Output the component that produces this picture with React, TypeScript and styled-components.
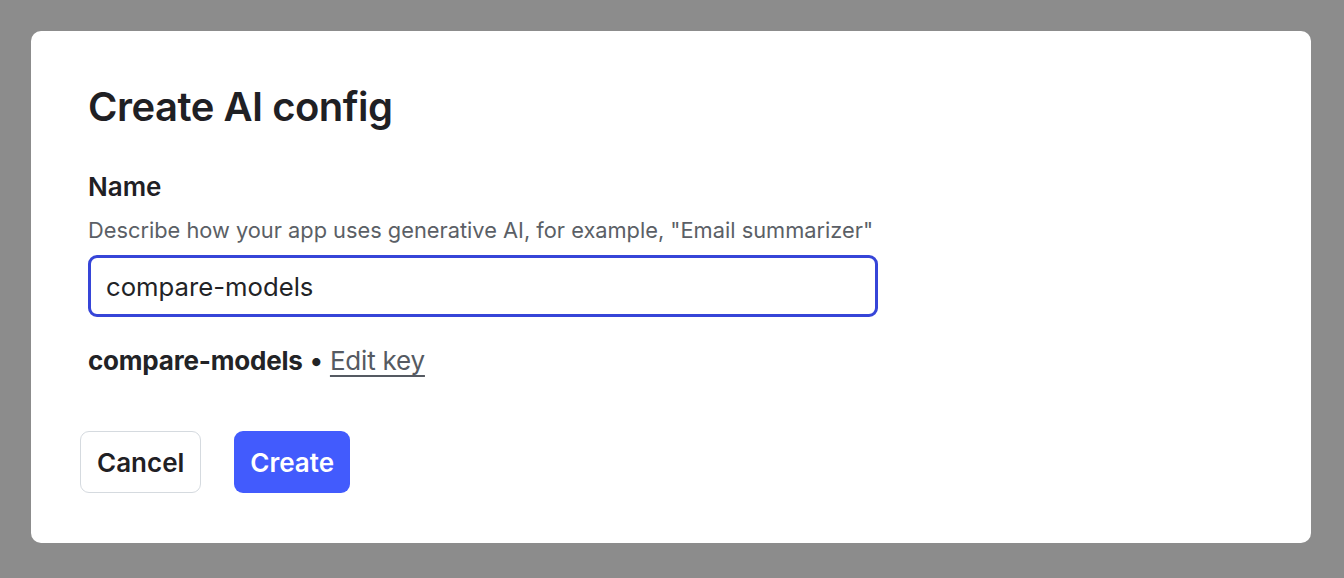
import styled, { createGlobalStyle } from "styled-components";

const GlobalStyle = createGlobalStyle`
    html, body {
        margin: 0;
        padding: 0;
        background: #8c8c8c;
        font-family: Inter, "Noto Sans", sans-serif;
    }
    * {
        box-sizing: border-box;
    }
`

const Backdrop = styled.div`
    width: 1344px;
    height: 578px;
    padding: 31px 33px 35px 31px;
    background: #8c8c8c;
`

const Dialog = styled.div`
    display: flex;
    flex-direction: column;
    height: 512px;
    background: #ffffff;
    border-radius: 10px;
    padding: 52px 57px 0 57px;
`

const Title = styled.h1`
    margin: 0;
    font-size: 40px;
    line-height: 48px;
    font-weight: 600;
    color: #1f2024;
    letter-spacing: -0.5px;
`

const Field = styled.div`
    display: flex;
    flex-direction: column;
    margin-top: 40px;
    width: 790px;
`

const Label = styled.label`
    font-size: 26px;
    font-weight: 600;
    line-height: 32px;
    color: #1f2024;
`

const Hint = styled.p`
    margin: 13px 0 0;
    font-size: 21.8px;
    line-height: 28px;
    white-space: nowrap;
    color: #5b5f66;
`

const Input = styled.input`
    margin-top: 11px;
    height: 62px;
    width: 100%;
    border: 3px solid #3645d8;
    border-radius: 9px;
    padding: 0 15px;
    font-family: inherit;
    font-size: 25.7px;
    color: #222326;
    outline: none;
`

const KeyLine = styled.div`
    margin-top: 28px;
    font-size: 26px;
    line-height: 32px;
    color: #222326;
`

const KeyName = styled.span`
    font-weight: 700;
    letter-spacing: -0.2px;
`

const Dot = styled.span`
    margin: 0 -1px;
`

const EditLink = styled.a`
    color: #555a62;
    text-decoration: underline;
    text-underline-offset: 5px;
    text-decoration-thickness: 1.5px;
    letter-spacing: -0.2px;
    cursor: pointer;
`

const Actions = styled.div`
    display: flex;
    gap: 33px;
    margin-top: 54px;
    margin-left: -8px;
`

const Button = styled.button<{ $primary?: boolean }>`
    height: 62px;
    padding: 0 16px;
    border-radius: 9px;
    font-family: inherit;
    font-size: 26px;
    font-weight: 600;
    cursor: pointer;
    border: ${({ $primary }) => ($primary ? "none" : "1.5px solid #d5dadf")};
    background: ${({ $primary }) => ($primary ? "#425bfd" : "#ffffff")};
    color: ${({ $primary }) => ($primary ? "#ffffff" : "#1f2024")};
`

const App = (): JSX.Element => {
    return (
        <>
            <GlobalStyle />
            <Backdrop>
                <Dialog>
                    <Title>Create AI config</Title>
                    <Field>
                        <Label htmlFor="name">Name</Label>
                        <Hint>Describe how your app uses generative AI, for example, "Email summarizer"</Hint>
                        <Input id="name" defaultValue="compare-models" autoComplete="off" />
                    </Field>
                    <KeyLine>
                        <KeyName>compare-models</KeyName> <Dot>•</Dot> <EditLink>Edit key</EditLink>
                    </KeyLine>
                    <Actions>
                        <Button>Cancel</Button>
                        <Button $primary>Create</Button>
                    </Actions>
                </Dialog>
            </Backdrop>
        </>
    )
}

export default App;
